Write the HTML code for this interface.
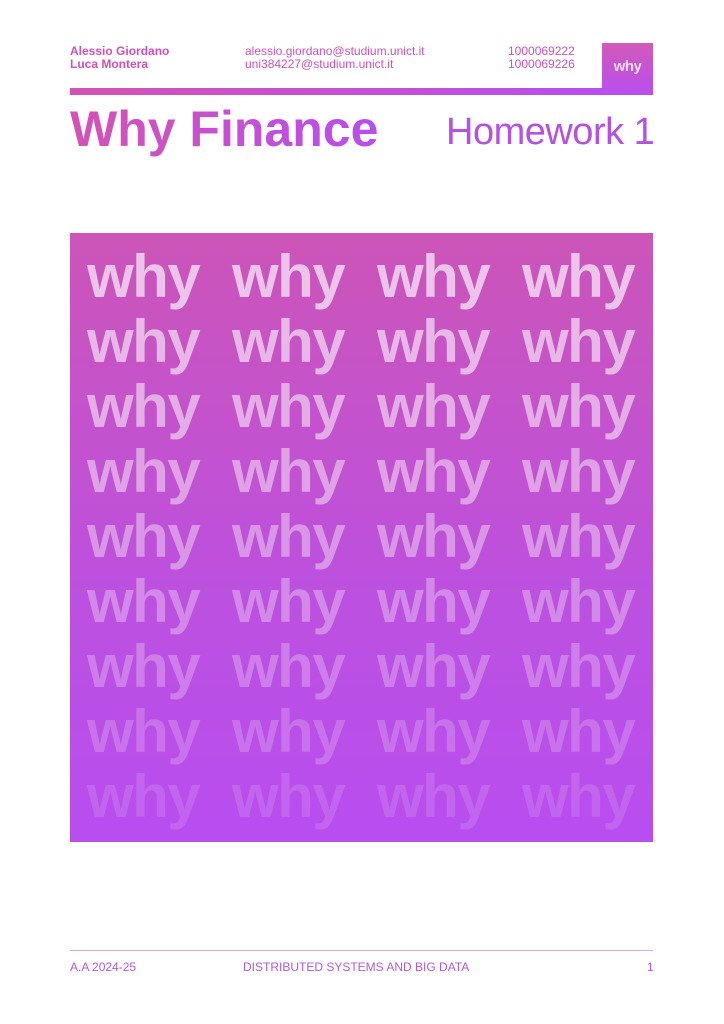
<!DOCTYPE html>
<html><head><style>
body{margin:0;width:724px;height:1024px;background:#fff;position:relative;font-family:"Liberation Sans",sans-serif;overflow:hidden}
.a{position:absolute}
.hd{font-size:12px;line-height:13px;color:#d04fb6}
.grad{background:linear-gradient(90deg,#d452b4,#b84ef0)}
.why{position:absolute;font-weight:bold;font-size:60px;line-height:60px;color:#f2d8f2;letter-spacing:-1.5px}
.ft{font-size:12px;color:#b458d8;top:960px}
</style></head><body>
<div class="a hd" style="left:70px;top:45px;font-weight:bold">Alessio Giordano<br>Luca Montera</div>
<div class="a hd" style="left:245px;top:45px">alessio.giordano@studium.unict.it<br>uni384227@studium.unict.it</div>
<div class="a hd" style="left:508px;top:45px">1000069222<br>1000069226</div>
<div class="a" style="left:602px;top:43px;width:51px;height:52px;background:linear-gradient(180deg,#d25ab8,#b84ef0)"></div>
<div class="a" style="left:602px;top:58px;width:51px;text-align:center;font-weight:bold;font-size:15px;color:#f4dcf4;letter-spacing:-0.5px">why</div>
<div class="a grad" style="left:70px;top:88px;width:533px;height:7px"></div>
<div class="a" style="left:70px;top:100px;font-weight:bold;font-size:50px;letter-spacing:0px;background:linear-gradient(90deg,#d452b4,#b84ef0);-webkit-background-clip:text;background-clip:text;color:transparent">Why Finance</div>
<div class="a" style="left:446px;top:111px;font-size:38px;color:#b450e4;letter-spacing:-0.5px">Homework 1</div>
<div class="a" style="left:70px;top:233px;width:583px;height:609px;background:linear-gradient(180deg,#cc55b8,#bc50e0 60%,#b84ef0);overflow:hidden" id="p"></div>
<script>
var p=document.getElementById('p'),h='';
for(var r=0;r<9;r++)for(var c=0;c<4;c++){
h+='<div class="why" style="left:'+(17+c*145)+'px;top:'+(14+r*65)+'px;opacity:'+(0.85-r*0.085)+'">why</div>';}
p.innerHTML=h;
</script>
<div class="a" style="left:70px;top:950px;width:583px;height:1px;background:#d9a8e4"></div>
<div class="a ft" style="left:70px">A.A 2024-25</div>
<div class="a ft" style="left:243px">DISTRIBUTED SYSTEMS AND BIG DATA</div>
<div class="a ft" style="left:647px">1</div>
</body></html>
